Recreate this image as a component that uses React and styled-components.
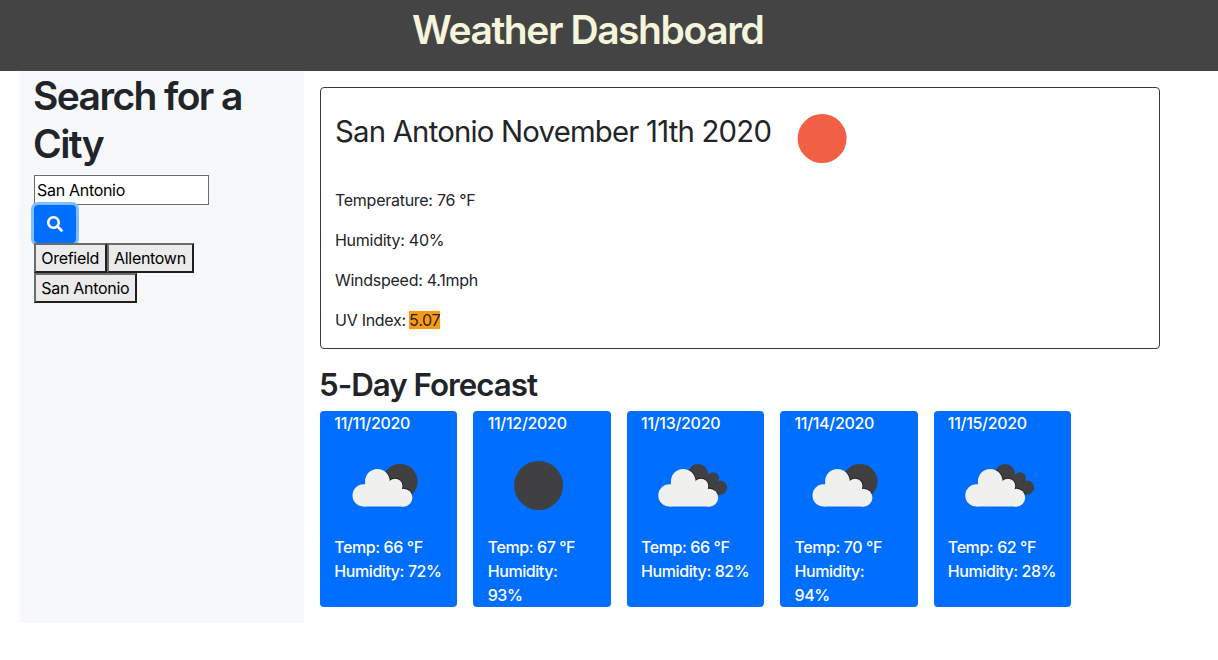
import React from "react";
import styled, { createGlobalStyle } from "styled-components";
import { FaSearch } from "react-icons/fa";

const GlobalStyle = createGlobalStyle`
  *, *::before, *::after { box-sizing: border-box; }
  body {
    margin: 0;
    background: #fff;
    color: #212529;
    font: 400 16px/24px Inter, "Liberation Sans", sans-serif;
    letter-spacing: -0.3px;
  }
`;

const Header = styled.header`
  height: 71px;
  padding: 6px 0 0 412px;
  background: #444;
`;

const Heading = styled.h1`
  margin: 0;
  font-size: ${(p) => p.$size}px;
  font-weight: ${(p) => p.$weight || 600};
  line-height: ${(p) => p.$line}px;
  letter-spacing: ${(p) => p.$spacing}px;
  color: ${(p) => p.$color || "inherit"};
  white-space: nowrap;
`;

const Page = styled.main`
  display: flex;
  padding-left: 19px;
`;

const Sidebar = styled.aside`
  width: 285px;
  height: 552px;
  padding: 1px 15px 0;
  background: #f7f8fa;
`;

const SidebarHeading = styled(Heading)`
  margin-left: -1px;
  white-space: normal;
`;

const SearchInput = styled.input`
  display: block;
  width: 175px;
  height: 30px;
  margin-top: 7px;
  padding: 1px 2px;
  border: 1px solid #6b6b6b;
  border-radius: 0;
  background: #fff;
  color: #000;
  font: inherit;
  letter-spacing: inherit;
  outline: none;
`;

const SearchButton = styled.button`
  display: flex;
  align-items: center;
  justify-content: center;
  width: 42px;
  height: 38px;
  padding: 0 1px 0 0;
  border: 0;
  border-radius: 4px;
  background: #006eff;
  color: #fff;
  box-shadow: 0 0 0 3px #80bfff;
`;

const History = styled.div`
  display: flex;
  flex-wrap: wrap;
  width: 200px;
  position: relative;
`;

const CityButton = styled.button`
  height: 30px;
  padding: 0 5.7px 0 5.3px;
  border: 2px solid;
  border-color: #6b6b6b #1f1f1f #1f1f1f #6b6b6b;
  background: #ebebeb;
  color: #000;
  font: inherit;
  letter-spacing: inherit;
`;

const Content = styled.section`
  padding: 16px 0 0 16px;
`;

const Current = styled.article`
  width: 840px;
  height: 262px;
  padding: 0 14px;
  border: 1px solid #343a40;
  border-radius: 4px;
`;

const CurrentTitle = styled.div`
  display: flex;
  align-items: flex-start;
  height: 100px;
`;

const CityName = styled(Heading)`
  width: 436.8px;
  padding-top: 26px;
`;

const Reading = styled.p`
  margin: 0 0 16px;
  letter-spacing: -0.27px;
`;

const UvBadge = styled.span`
  display: inline-block;
  line-height: 18px;
  margin-left: -1px;
  background: #ff9914;
`;

const ForecastHeading = styled(Heading)`
  margin: 17px 0 0 -1px;
`;

const Forecast = styled.div`
  display: flex;
  gap: 16px;
  margin-top: 7px;
`;

const DayCard = styled.article`
  width: 137.4px;
  height: 196px;
  padding: 0 14.3px;
  border-radius: 4px;
  background: #006eff;
  color: #fff;
  font-weight: 500;
`;

const DayText = styled.p`
  margin: 0;
  letter-spacing: ${(p) => p.$spacing || -0.42}px;
  white-space: pre;
`;

const Icon = styled.svg`
  display: block;
  flex: none;
  width: 100px;
  height: 100px;
`;

const CloudShape = () => (
  <>
    <circle cx="29.7" cy="60.4" r="11.2" />
    <circle cx="43.4" cy="46.3" r="12.3" />
    <circle cx="61.1" cy="51.1" r="7.4" />
    <circle cx="69.4" cy="62.7" r="9" />
    <path d="M29.7 71.6H69.4V55L58 48H31.1V60Z" />
  </>
);

const DarkSun = () => <circle cx="66" cy="46.6" r="17.6" />;

const DarkCloud = () => (
  <>
    <circle cx="57.1" cy="39.2" r="10.2" />
    <circle cx="72.1" cy="43" r="5.8" />
    <circle cx="78.9" cy="52.6" r="7.2" />
    <path d="M50 42H75L78.9 59.8H60Z" />
  </>
);

const PairedIcon = ({ id, dx, back: Back }) => (
  <>
    <clipPath id={id}>{Back({})}</clipPath>
    <g fill="#404042"><Back /></g>
    <g clipPath={`url(#${id})`}>
      <g fill="#222224" stroke="#222224" strokeWidth="2" transform={`translate(${dx} 0)`}>
        <CloudShape />
      </g>
    </g>
    <g fill="#f0f0ef" transform={`translate(${dx} 0)`}><CloudShape /></g>
  </>
);

const WeatherIcon = ({ kind, id }) => (
  <Icon viewBox="0 0 100 100">
    {kind === "sun" && <circle cx="50.1" cy="50.5" r="24.5" fill="#f16045" />}
    {kind === "clear" && <circle cx="50.6" cy="50.5" r="24.5" fill="#404042" />}
    {kind === "few" && <PairedIcon id={id} dx={0} back={DarkSun} />}
    {kind === "broken" && <PairedIcon id={id} dx={-1.2} back={DarkCloud} />}
  </Icon>
);

const days = [
  { date: "11/11/2020", icon: "few", temp: 66, humidity: " 72%" },
  { date: "11/12/2020", icon: "clear", temp: 67, humidity: "\n93%" },
  { date: "11/13/2020", icon: "broken", temp: 66, humidity: " 82%" },
  { date: "11/14/2020", icon: "few", temp: 70, humidity: "\n94%" },
  { date: "11/15/2020", icon: "broken", temp: 62, humidity: " 28%" },
];

export default function App() {
  return (
    <>
      <GlobalStyle />
      <Header>
        <Heading $size={39} $line={48} $spacing={-1.42} $color="#f5f5dc">Weather Dashboard</Heading>
      </Header>
      <Page>
        <Sidebar>
          <SidebarHeading as="h2" $size={39} $line={48} $spacing={-1.6}>Search for a City</SidebarHeading>
          <SearchInput defaultValue="San Antonio" />
          <SearchButton aria-label="Search"><FaSearch size={16} /></SearchButton>
          <History>
            {["Orefield", "Allentown", "San Antonio"].map((c) => (
              <CityButton key={c}>{c}</CityButton>
            ))}
          </History>
        </Sidebar>
        <Content>
          <Current>
            <CurrentTitle>
              <CityName as="h2" $size={29.3} $line={36} $weight={400} $spacing={-0.78}>San Antonio November 11th 2020</CityName>
              <WeatherIcon kind="sun" />
            </CurrentTitle>
            <Reading>Temperature: 76 °F</Reading>
            <Reading>Humidity: 40%</Reading>
            <Reading>Windspeed: 4.1mph</Reading>
            <Reading>UV Index: <UvBadge>5.07</UvBadge></Reading>
          </Current>
          <ForecastHeading as="h2" $size={31.3} $line={38.4} $spacing={-1}>5-Day Forecast</ForecastHeading>
          <Forecast>
            {days.map((d) => (
              <DayCard key={d.date}>
                <DayText $spacing={-0.3}>{d.date}</DayText>
                <WeatherIcon kind={d.icon} id={`back-${d.date.slice(3, 5)}`} />
                <DayText>{`Temp: ${d.temp} °F`}</DayText>
                <DayText>{`Humidity:${d.humidity}`}</DayText>
              </DayCard>
            ))}
          </Forecast>
        </Content>
      </Page>
    </>
  );
}
